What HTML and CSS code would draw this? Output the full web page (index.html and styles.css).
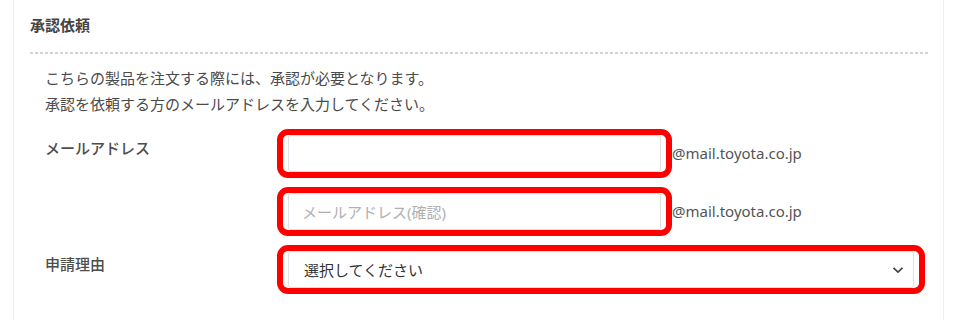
FILE: index.html
```html
<!DOCTYPE html>
<html lang="ja">
<head>
  <meta charset="UTF-8">
  <title>承認依頼</title>
  <link rel="stylesheet" href="styles.css">
</head>
<body>
  <div class="card">
    <h2 class="card-title">承認依頼</h2>

    <div class="card-body">
      <p class="note">こちらの製品を注文する際には、承認が必要となります。<br>承認を依頼する方のメールアドレスを入力してください。</p>

      <!-- Approver email -->
      <div class="form-row">
        <label class="form-label" for="mail">メールアドレス</label>
        <div class="form-field">
          <span class="highlight"><input type="text" id="mail" class="text-input"></span>
          <span class="domain">@mail.toyota.co.jp</span>
        </div>
      </div>

      <div class="form-row">
        <span class="form-label"></span>
        <div class="form-field">
          <span class="highlight"><input type="text" id="mail-confirm" class="text-input" placeholder="メールアドレス(確認)"></span>
          <span class="domain">@mail.toyota.co.jp</span>
        </div>
      </div>

      <!-- Reason -->
      <div class="form-row">
        <label class="form-label" for="reason">申請理由</label>
        <div class="form-field">
          <span class="highlight">
            <span class="select-wrap">
              <select id="reason" class="select-input">
                <option>選択してください</option>
              </select>
              <svg class="chevron" width="12" height="8" viewBox="0 0 12 8">
                <path d="M1.5 1.8 L6 6 L10.5 1.8" fill="none" stroke="#444" stroke-width="1.7" />
              </svg>
            </span>
          </span>
        </div>
      </div>
    </div>
  </div>
</body>
</html>
```

FILE: styles.css
```css
body {
  margin: 0;
  background: #fff;
  font-family: "Noto Sans", "Noto Sans CJK JP", sans-serif;
  color: #4a4a4a;
}
.card {
  margin-left: 13px;
  width: 931px;
  min-height: 320px;
  box-sizing: border-box;
  border-left: 1px solid #f0f0f0;
  border-right: 1px solid #f0f0f0;
  padding: 0 14px 0 16px;
}
.card-title {
  margin: 0;
  padding: 15px 0 17px;
  font-size: 15px;
  line-height: 20px;
  font-weight: bold;
  color: #444;
  background: repeating-linear-gradient(to right, #d2d2d2 0 3px, transparent 3px 5px) left bottom / 100% 2px no-repeat;
  padding-bottom: 19px;
}
.card-body {
  padding-left: 15px;
}
.note {
  margin: 11px 0 12px;
  font-size: 15px;
  line-height: 26px;
}
.form-row {
  display: flex;
  margin-bottom: 9px;
}
.form-label {
  width: 232px;
  flex-shrink: 0;
  padding-top: 9px;
  font-size: 15px;
  line-height: 20px;
  font-weight: 500;
  color: #4d4d4d;
}
.form-field {
  display: flex;
  align-items: center;
}
.highlight {
  display: flex;
  border: 6px solid #ff0000;
  border-radius: 11px;
  padding: 0 5px;
}
.text-input {
  width: 373px;
  height: 37px;
  box-sizing: border-box;
  border: 1px solid #dcdfe4;
  border-radius: 3px;
  padding: 0 13px;
  font-family: inherit;
  font-size: 15px;
  color: #333;
  background: #fff;
}
.text-input::placeholder {
  color: #b0b0b0;
}
.domain {
  font-size: 15px;
  color: #555;
  padding-bottom: 1px;
}
.select-wrap {
  position: relative;
  display: block;
}
.select-input {
  appearance: none;
  display: block;
  width: 626px;
  height: 37px;
  box-sizing: border-box;
  border: 1px solid #dcdfe4;
  border-radius: 3px;
  padding: 0 15px;
  font-family: inherit;
  font-size: 15px;
  color: #333;
  background: #fff;
}
.chevron {
  position: absolute;
  right: 10px;
  top: 15px;
}
```
